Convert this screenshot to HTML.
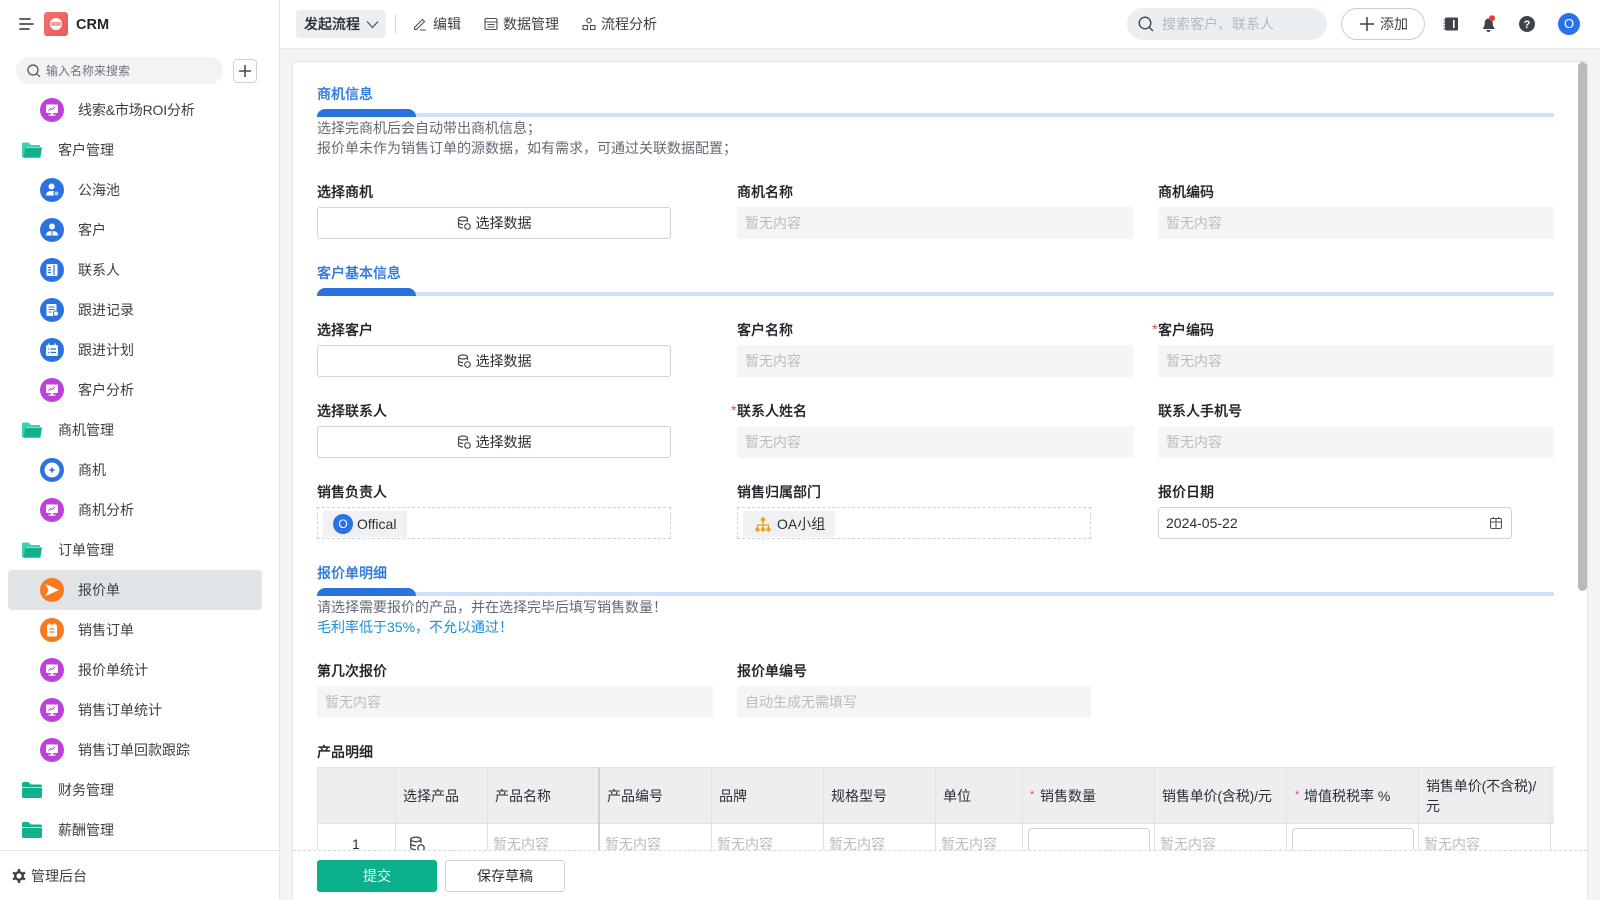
<!DOCTYPE html>
<html lang="zh"><head><meta charset="utf-8"><title>CRM</title>
<style>
*{box-sizing:border-box}
html,body{margin:0;padding:0;width:1600px;height:900px;overflow:hidden;background:#f2f3f5;font-family:"Liberation Sans","Noto Sans CJK SC",sans-serif;font-size:14px;color:#1f2329}
.a{position:absolute}
.t{position:absolute;line-height:20px;white-space:nowrap}
.s{color:#3b4047}
.l{font-weight:500;color:#1f2329;-webkit-text-stroke:.2px #1f2329}
.h{font-weight:500;color:#2f7ae0;-webkit-text-stroke:.2px #2f7ae0}
.d{color:#646a73}
.i{position:absolute;height:32px;background:#f4f5f6;border-radius:2px;color:#b9bcc0;line-height:32px;padding-left:8px}
.b{position:absolute;left:317px;width:354px;height:32px;background:#fff;border:1px solid #cfd2d6;border-radius:3px;line-height:30px;text-align:center;color:#2b2f36}
.b svg{vertical-align:-2px;margin-right:5px}
.bar{position:absolute;left:317px;width:1237px;height:8px}
.bar i{position:absolute;left:0;right:0;bottom:0;height:4px;background:#cfe0f8}
.bar b{position:absolute;left:0;top:0;width:99px;height:8px;background:#2a72e0;border-radius:8px 8px 0 0}
.c{position:absolute;width:24px;height:24px;left:40px}
.v{position:absolute;top:767px;height:83px;width:1px;background:#dfe1e4}
.th{position:absolute;line-height:20px;color:#2b2f36;white-space:nowrap}
.p{position:absolute;top:834px;color:#b9bcc0;line-height:20px}
</style></head><body>
<svg width="0" height="0" style="position:absolute">
<symbol id="mon" viewBox="0 0 24 24"><circle cx="12" cy="12" r="12" fill="#bd40d8"/><rect x="6" y="6.500" width="12" height="8.500" rx="1" fill="#fff"/><path d="M8.500 12.500l2-2 1.500 1 3-2.500" stroke="#bd40d8" fill="none"/><rect x="11" y="15" width="2" height="2" fill="#fff"/><rect x="8.500" y="16.500" width="7" height="1.200" fill="#fff"/></symbol>
<symbol id="open" viewBox="0 0 20 18"><path d="M0 3a1.500 1.500 0 0 1 1.500-1.500h5L9 4h9v2H4L1 16H0z" fill="#3fd0ae"/><path d="M3.500 6.500H20l-1.500 9.500a1 1 0 0 1-1 .8H1z" fill="#12b08c"/></symbol>
<symbol id="closed" viewBox="0 0 20 18"><path d="M0 2.500A1.500 1.500 0 0 1 1.500 1h5L9 3.500h9.500A1.500 1.500 0 0 1 20 5v1H0z" fill="#12b08c"/><rect y="6.800" width="20" height="10.200" rx="1.500" fill="#12b08c"/></symbol>
<symbol id="db" viewBox="0 0 14 14"><ellipse cx="6" cy="3" rx="4.500" ry="2" fill="none" stroke="#4a4f57" stroke-width="1.200"/><path d="M1.500 3v7c0 1.200 2 2 4.500 2M1.500 6.500c0 1.200 2 2 4.500 2M10.500 3v3" fill="none" stroke="#4a4f57" stroke-width="1.200"/><circle cx="10.500" cy="10.500" r="2.800" fill="none" stroke="#4a4f57" stroke-width="1.200"/></symbol>
</svg>

<!-- sidebar -->
<div class="a" style="left:0;top:0;width:280px;height:900px;background:#fff;border-right:1px solid #e2e4e7"></div>
<svg class="a" style="left:19px;top:17px" width="15" height="14"><path d="M1 2h10M1 7h13M1 12h9" stroke="#4a4f57" stroke-width="1.800" stroke-linecap="round"/></svg>
<div class="a" style="left:44px;top:12px;width:24px;height:24px;border-radius:3px;background:linear-gradient(135deg,#f2716e,#e85a58)"></div>
<div class="a" style="left:50px;top:18px;width:12px;height:12px;border-radius:50%;background:#fff"></div>
<div class="a" style="left:51px;top:22px;width:10px;height:4px;background:#f0a09e"></div>
<div class="t" style="left:76px;top:15px;font-size:14.500px;font-weight:700;color:#1f2329">CRM</div>
<div class="a" style="left:16px;top:57px;width:207px;height:27px;background:#f1f3f4;border-radius:14px"></div>
<svg class="a" style="left:27px;top:64px" width="14" height="14" viewBox="0 0 14 14"><circle cx="6" cy="6" r="5" fill="none" stroke="#4a4f57" stroke-width="1.200"/><path d="M9.700 9.700L13 13" stroke="#4a4f57" stroke-width="1.200"/></svg>
<div class="t" style="left:46px;top:61px;font-size:12px;color:#6f747c">输入名称来搜索</div>
<div class="a" style="left:233px;top:59px;width:24px;height:24px;border:1px solid #cfd2d6;border-radius:4px"></div>
<svg class="a" style="left:238px;top:64px" width="14" height="14"><path d="M7 1v12M1 7h12" stroke="#4a4f57" stroke-width="1.600"/></svg>

<svg class="c" style="top:98px"><use href="#mon"/></svg>
<div class="t s" style="left:78px;top:100px;letter-spacing:-.15px">线索&amp;市场ROI分析</div>
<svg class="a" style="left:22px;top:141px" width="20" height="18"><use href="#open"/></svg>
<div class="t s" style="left:58px;top:140px">客户管理</div>

<svg class="c" style="top:178px" viewBox="0 0 24 24"><circle cx="12" cy="12" r="12" fill="#2a72e0"/><circle cx="11.500" cy="8.500" r="3" fill="#fff"/><path d="M6 17.500c0-3 2-4.500 5.500-4.500s5.500 1.500 5.500 4.500z" fill="#fff"/><circle cx="16.500" cy="15.500" r="2.500" fill="#a9c8f5" stroke="#2a72e0"/></svg>
<div class="t s" style="left:78px;top:180px">公海池</div>
<svg class="c" style="top:218px" viewBox="0 0 24 24"><circle cx="12" cy="12" r="12" fill="#2a72e0"/><circle cx="12" cy="8.500" r="3" fill="#fff"/><path d="M6 17.500c0-3 2-4.500 6-4.500s6 1.500 6 4.500z" fill="#fff"/><path d="M12 13v4" stroke="#2a72e0"/></svg>
<div class="t s" style="left:78px;top:220px">客户</div>
<svg class="c" style="top:258px" viewBox="0 0 24 24"><circle cx="12" cy="12" r="12" fill="#2a72e0"/><rect x="6.500" y="6" width="11" height="12" rx="1" fill="#fff"/><path d="M8 9.500h3M8 12h3M8 14.500h3M14 7v10" stroke="#2a72e0" stroke-width="1.200"/></svg>
<div class="t s" style="left:78px;top:260px">联系人</div>
<svg class="c" style="top:298px" viewBox="0 0 24 24"><circle cx="12" cy="12" r="12" fill="#2a72e0"/><rect x="6.500" y="6" width="10" height="12" rx="1" fill="#fff"/><path d="M8.500 9h6M8.500 11.500h6M8.500 14h3" stroke="#2a72e0" stroke-width="1.100"/><circle cx="16" cy="15.500" r="2.600" fill="#fff" stroke="#2a72e0"/></svg>
<div class="t s" style="left:78px;top:300px">跟进记录</div>
<svg class="c" style="top:338px" viewBox="0 0 24 24"><circle cx="12" cy="12" r="12" fill="#2a72e0"/><rect x="6" y="7" width="12" height="11" rx="1.500" fill="#fff"/><path d="M9 5.500v3M15 5.500v3" stroke="#fff" stroke-width="1.400"/><path d="M8 11h1M10.500 11H16M8 14.500h1M10.500 14.500H16" stroke="#2a72e0" stroke-width="1.200"/></svg>
<div class="t s" style="left:78px;top:340px">跟进计划</div>
<svg class="c" style="top:378px"><use href="#mon"/></svg>
<div class="t s" style="left:78px;top:380px">客户分析</div>
<svg class="a" style="left:22px;top:421px" width="20" height="18"><use href="#open"/></svg>
<div class="t s" style="left:58px;top:420px">商机管理</div>
<svg class="c" style="top:458px" viewBox="0 0 24 24"><circle cx="12" cy="12" r="12" fill="#2a72e0"/><circle cx="12" cy="12" r="7.500" fill="#fff"/><path d="M12 8.500l1 2.500 2.500 1-2.500 1-1 2.500-1-2.500-2.500-1 2.500-1z" fill="#2a72e0"/></svg>
<div class="t s" style="left:78px;top:460px">商机</div>
<svg class="c" style="top:498px"><use href="#mon"/></svg>
<div class="t s" style="left:78px;top:500px">商机分析</div>
<svg class="a" style="left:22px;top:541px" width="20" height="18"><use href="#open"/></svg>
<div class="t s" style="left:58px;top:540px">订单管理</div>
<div class="a" style="left:8px;top:570px;width:254px;height:40px;background:#e1e4e7;border-radius:4px"></div>
<svg class="c" style="top:578px" viewBox="0 0 24 24"><circle cx="12" cy="12" r="12" fill="#f97a1c"/><path d="M5.500 6l13.500 6-13.500 6 3-6z" fill="#fff"/></svg>
<div class="t s" style="left:78px;top:580px">报价单</div>
<svg class="c" style="top:618px" viewBox="0 0 24 24"><circle cx="12" cy="12" r="12" fill="#f97a1c"/><rect x="7" y="6.500" width="10" height="12" rx="1.500" fill="#fff"/><path d="M9.500 5.500v2.500M14.500 5.500v2.500" stroke="#fff" stroke-width="1.400"/><path d="M9.500 11h5M9.500 14h5" stroke="#f97a1c" stroke-width="1.200"/></svg>
<div class="t s" style="left:78px;top:620px">销售订单</div>
<svg class="c" style="top:658px"><use href="#mon"/></svg>
<div class="t s" style="left:78px;top:660px">报价单统计</div>
<svg class="c" style="top:698px"><use href="#mon"/></svg>
<div class="t s" style="left:78px;top:700px">销售订单统计</div>
<svg class="c" style="top:738px"><use href="#mon"/></svg>
<div class="t s" style="left:78px;top:740px">销售订单回款跟踪</div>
<svg class="a" style="left:22px;top:781px" width="20" height="18"><use href="#closed"/></svg>
<div class="t s" style="left:58px;top:780px">财务管理</div>
<svg class="a" style="left:22px;top:821px" width="20" height="18"><use href="#closed"/></svg>
<div class="t s" style="left:58px;top:820px">薪酬管理</div>
<div class="a" style="left:0;top:850px;width:279px;height:50px;background:#fff;border-top:1px solid #e2e4e7"></div>
<svg class="a" style="left:12px;top:869px" width="14" height="14" viewBox="0 0 14 14"><circle cx="7" cy="7" r="3.800" fill="none" stroke="#3b4047" stroke-width="2.400"/><path d="M7 0v2.500M7 11.500V14M1 3.500l2.200 1.300M10.800 9.200L13 10.500M1 10.500l2.200-1.300M10.800 4.800L13 3.500" stroke="#3b4047" stroke-width="2.400"/></svg>
<div class="t s" style="left:31px;top:866px">管理后台</div>

<!-- top bar -->
<div class="a" style="left:280px;top:0;width:1320px;height:49px;background:#fff;border-bottom:1px solid #e6e8ea"></div>
<div class="a" style="left:296px;top:10px;width:90px;height:28px;background:#eceff2;border-radius:4px"></div>
<div class="t" style="left:304px;top:14px;font-weight:500;color:#2b2f36;-webkit-text-stroke:.2px #2b2f36">发起流程</div>
<svg class="a" style="left:366px;top:20px" width="13" height="9"><path d="M1 1.500l5.500 6 5.500-6" fill="none" stroke="#4a4f57" stroke-width="1.200"/></svg>
<div class="a" style="left:395px;top:14px;width:1px;height:20px;background:#d8dadd"></div>
<svg class="a" style="left:413px;top:17px" width="14" height="14" viewBox="0 0 14 14"><path d="M1.500 10.500L9.500 2.500l2 2-8 8H1.500zM7 13h6" fill="none" stroke="#4a4f57" stroke-width="1.100"/></svg>
<div class="t s" style="left:433px;top:14px">编辑</div>
<svg class="a" style="left:484px;top:17px" width="14" height="14" viewBox="0 0 14 14"><rect x="1" y="1.500" width="12" height="11" rx="1.500" fill="none" stroke="#4a4f57" stroke-width="1.100"/><path d="M1 5h12M3.500 7.500h7M3.500 10h7" stroke="#4a4f57" stroke-width="1"/></svg>
<div class="t s" style="left:503px;top:14px">数据管理</div>
<svg class="a" style="left:582px;top:17px" width="14" height="14" viewBox="0 0 14 14"><circle cx="7" cy="3.500" r="2.300" fill="none" stroke="#4a4f57" stroke-width="1.100"/><path d="M3 12h8" stroke="#4a4f57" stroke-width="0"/><rect x="1" y="8.500" width="4.500" height="4" fill="none" stroke="#4a4f57" stroke-width="1.100"/><rect x="8.500" y="8.500" width="4.500" height="4" fill="none" stroke="#4a4f57" stroke-width="1.100"/></svg>
<div class="t s" style="left:601px;top:14px">流程分析</div>
<div class="a" style="left:1127px;top:8px;width:200px;height:32px;background:#eceff1;border-radius:16px"></div>
<svg class="a" style="left:1138px;top:16px" width="16" height="16" viewBox="0 0 16 16"><circle cx="7" cy="7" r="5.800" fill="none" stroke="#3b4047" stroke-width="1.300"/><path d="M11.200 11.200L15 15" stroke="#3b4047" stroke-width="1.300"/></svg>
<div class="t" style="left:1162px;top:14px;color:#b5b8bb">搜索客户、联系人</div>
<div class="a" style="left:1341px;top:8px;width:84px;height:32px;border:1px solid #c9cdd1;border-radius:16px;background:#fff"></div>
<svg class="a" style="left:1360px;top:17px" width="14" height="14"><path d="M7 0v14M0 7h14" stroke="#3b4047" stroke-width="1.500"/></svg>
<div class="t s" style="left:1380px;top:14px">添加</div>
<svg class="a" style="left:1443px;top:16px" width="16" height="16" viewBox="0 0 16 16"><rect x="2" y="1.500" width="13" height="13" rx="1.500" fill="#3f444c"/><path d="M0.500 4h2M0.500 7h2M0.500 10h2M0.500 13h2" stroke="#3f444c" stroke-width="1"/><rect x="10" y="4" width="1.600" height="8" fill="#fff"/></svg>
<svg class="a" style="left:1481px;top:15px" width="16" height="18" viewBox="0 0 16 18"><path d="M7.500 3.500c-2.600 0-3.800 2.300-3.800 5 0 2.500-.8 3.500-1.700 4.500v1h11.500v-1c-.9-1-1.700-2-1.700-4.500 0-2.700-1.700-5-4.300-5z" fill="#3f444c"/><path d="M5.500 15h4a2 2 0 0 1-4 0z" fill="#3f444c"/><circle cx="11" cy="3.200" r="3" fill="#ea3a3a"/></svg>
<svg class="a" style="left:1519px;top:16px" width="16" height="16" viewBox="0 0 16 16"><circle cx="8" cy="8" r="8" fill="#3f444c"/><text x="8" y="12" font-size="11" font-weight="700" text-anchor="middle" fill="#fff" font-family="Liberation Sans">?</text></svg>
<div class="a" style="left:1558px;top:13px;width:22px;height:22px;border-radius:50%;background:#2a72e8;color:#fff;text-align:center;line-height:22px;font-size:13px">O</div>

<!-- card -->
<div class="a" style="left:292px;top:61px;width:1296px;height:839px;background:#fff;border:1px solid #e2e4e6;border-bottom:0;border-radius:3px 3px 0 0"></div>
<div class="a" style="left:1578px;top:62px;width:9px;height:529px;background:#b8babd;border-radius:5px"></div>

<div class="t h" style="left:317px;top:84px">商机信息</div>
<div class="bar" style="top:109px"><i></i><b></b></div>
<div class="t d" style="left:317px;top:118px">选择完商机后会自动带出商机信息；</div>
<div class="t d" style="left:317px;top:138px">报价单未作为销售订单的源数据，如有需求，可通过关联数据配置；</div>
<div class="t l" style="left:317px;top:182px">选择商机</div>
<div class="t l" style="left:737px;top:182px">商机名称</div>
<div class="t l" style="left:1158px;top:182px">商机编码</div>
<div class="b" style="top:207px"><svg width="14" height="14"><use href="#db"/></svg>选择数据</div>
<div class="i" style="left:737px;top:207px;width:397px">暂无内容</div>
<div class="i" style="left:1158px;top:207px;width:396px">暂无内容</div>

<div class="t h" style="left:317px;top:263px">客户基本信息</div>
<div class="bar" style="top:288px"><i></i><b></b></div>
<div class="t l" style="left:317px;top:320px">选择客户</div>
<div class="t l" style="left:737px;top:320px">客户名称</div>
<div class="t" style="left:1152px;top:319px;color:#e5484d">*</div>
<div class="t l" style="left:1158px;top:320px">客户编码</div>
<div class="b" style="top:345px"><svg width="14" height="14"><use href="#db"/></svg>选择数据</div>
<div class="i" style="left:737px;top:345px;width:397px">暂无内容</div>
<div class="i" style="left:1158px;top:345px;width:396px">暂无内容</div>

<div class="t l" style="left:317px;top:401px">选择联系人</div>
<div class="t" style="left:731px;top:400px;color:#e5484d">*</div>
<div class="t l" style="left:737px;top:401px">联系人姓名</div>
<div class="t l" style="left:1158px;top:401px">联系人手机号</div>
<div class="b" style="top:426px"><svg width="14" height="14"><use href="#db"/></svg>选择数据</div>
<div class="i" style="left:737px;top:426px;width:397px">暂无内容</div>
<div class="i" style="left:1158px;top:426px;width:396px">暂无内容</div>

<div class="t l" style="left:317px;top:482px">销售负责人</div>
<div class="t l" style="left:737px;top:482px">销售归属部门</div>
<div class="t l" style="left:1158px;top:482px">报价日期</div>
<div class="a" style="left:317px;top:507px;width:354px;height:32px;border:1px dashed #cfd2d6"></div>
<div class="a" style="left:323px;top:511px;width:84px;height:26px;background:#f0f1f2;border-radius:2px"></div>
<div class="a" style="left:333px;top:514px;width:20px;height:20px;border-radius:50%;background:#2a72e8;color:#fff;text-align:center;line-height:20px;font-size:12px">O</div>
<div class="t" style="left:357px;top:514px;color:#2b2f36">Offical</div>
<div class="a" style="left:737px;top:507px;width:354px;height:32px;border:1px dashed #cfd2d6"></div>
<div class="a" style="left:743px;top:511px;width:92px;height:26px;background:#f0f1f2;border-radius:2px"></div>
<svg class="a" style="left:755px;top:517px" width="16" height="15" viewBox="0 0 16 15"><circle cx="8" cy="2.500" r="2.200" fill="#eda021"/><path d="M8 4v4M2.500 11V8h11v3M8 8v3" fill="none" stroke="#eda021" stroke-width="1.300"/><circle cx="2.500" cy="12.500" r="2.200" fill="#eda021"/><circle cx="8" cy="12.500" r="2.200" fill="#eda021"/><circle cx="13.500" cy="12.500" r="2.200" fill="#eda021"/></svg>
<div class="t" style="left:777px;top:514px;color:#2b2f36">OA小组</div>
<div class="a" style="left:1158px;top:507px;width:354px;height:32px;border:1px solid #d0d3d6;border-radius:4px"></div>
<div class="t" style="left:1166px;top:513px;color:#2b2f36">2024-05-22</div>
<svg class="a" style="left:1490px;top:517px" width="12" height="12" viewBox="0 0 12 12"><rect x=".5" y="1.500" width="11" height="10" rx="1.500" fill="none" stroke="#4a4f57"/><path d="M.5 5h11M6 1.500v10M3.500 0v2M8.500 0v2" stroke="#4a4f57"/></svg>

<div class="t h" style="left:317px;top:563px">报价单明细</div>
<div class="bar" style="top:588px"><i></i><b></b></div>
<div class="t d" style="left:317px;top:597px">请选择需要报价的产品，并在选择完毕后填写销售数量！</div>
<div class="t" style="left:317px;top:617px;color:#1a8fd6">毛利率低于35%，不允以通过！</div>
<div class="t l" style="left:317px;top:661px">第几次报价</div>
<div class="t l" style="left:737px;top:661px">报价单编号</div>
<div class="i" style="left:317px;top:686px;width:396px">暂无内容</div>
<div class="i" style="left:737px;top:686px;width:354px">自动生成无需填写</div>
<div class="t l" style="left:317px;top:742px">产品明细</div>

<!-- table -->
<div class="a" style="left:317px;top:767px;width:1237px;height:57px;background:#eceef0;border-top:1px solid #dfe1e4;border-bottom:1px solid #dfe1e4"></div>
<div class="v" style="left:317px"></div><div class="v" style="left:395px"></div><div class="v" style="left:487px"></div><div class="v" style="left:598px;width:2px;background:#cfd1d4"></div><div class="v" style="left:711px"></div><div class="v" style="left:823px"></div><div class="v" style="left:935px"></div><div class="v" style="left:1022px"></div><div class="v" style="left:1154px"></div><div class="v" style="left:1286px"></div><div class="v" style="left:1418px"></div><div class="v" style="left:1550px"></div>
<div class="th" style="left:403px;top:786px">选择产品</div>
<div class="th" style="left:495px;top:786px">产品名称</div>
<div class="th" style="left:607px;top:786px">产品编号</div>
<div class="th" style="left:719px;top:786px">品牌</div>
<div class="th" style="left:831px;top:786px">规格型号</div>
<div class="th" style="left:943px;top:786px">单位</div>
<div class="th" style="left:1030px;top:785px;color:#e5484d;font-size:11px">*</div>
<div class="th" style="left:1040px;top:786px">销售数量</div>
<div class="th" style="left:1162px;top:786px;letter-spacing:-.15px">销售单价(含税)/元</div>
<div class="th" style="left:1295px;top:785px;color:#e5484d;font-size:11px">*</div>
<div class="th" style="left:1304px;top:786px">增值税税率 %</div>
<div class="th" style="left:1426px;top:776px;letter-spacing:-.1px">销售单价(不含税)/<br>元</div>
<div class="t" style="left:352px;top:834px;color:#2b2f36">1</div>
<svg class="a" style="left:409px;top:836px" width="16" height="16"><use href="#db"/></svg>
<div class="p" style="left:493px">暂无内容</div><div class="p" style="left:605px">暂无内容</div><div class="p" style="left:717px">暂无内容</div><div class="p" style="left:829px">暂无内容</div><div class="p" style="left:941px">暂无内容</div><div class="p" style="left:1160px">暂无内容</div><div class="p" style="left:1424px">暂无内容</div>
<div class="a" style="left:1028px;top:828px;width:122px;height:32px;border:1px solid #d0d3d6;border-radius:4px;background:#fff"></div>
<div class="a" style="left:1292px;top:828px;width:122px;height:32px;border:1px solid #d0d3d6;border-radius:4px;background:#fff"></div>

<!-- footer -->
<div class="a" style="left:293px;top:850px;width:1294px;height:50px;background:#fff;border-top:1px dashed #d5d7da"></div>
<div class="a" style="left:317px;top:860px;width:120px;height:32px;background:#0cb08a;border-radius:3px;color:#e8fbf5;text-align:center;line-height:32px">提交</div>
<div class="a" style="left:445px;top:860px;width:120px;height:32px;background:#fff;border:1px solid #cfd2d6;border-radius:3px;color:#2b2f36;text-align:center;line-height:30px">保存草稿</div>
</body></html>
